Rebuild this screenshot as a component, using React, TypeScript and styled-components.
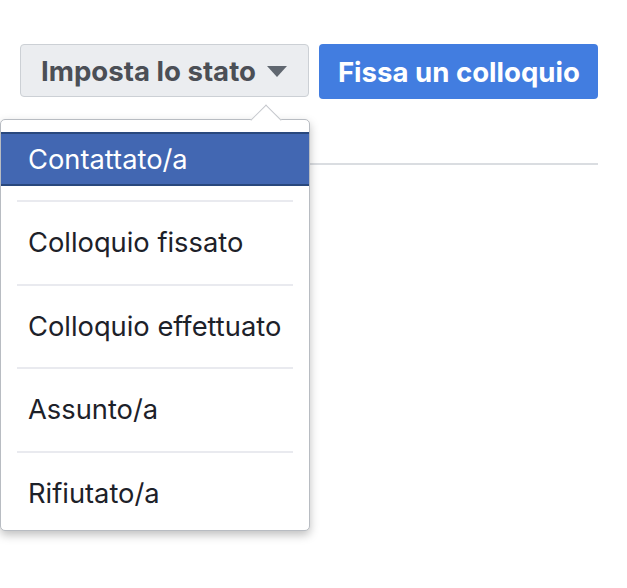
import React from "react";
import styled, { createGlobalStyle } from "styled-components";

const Global = createGlobalStyle`
  html, body { margin: 0; padding: 0; background: #ffffff; }
  body { font-family: Inter, "Helvetica Neue", Arial, sans-serif; -webkit-font-smoothing: antialiased; }
`;

const Page = styled.div`
  position: relative;
  width: 627px;
  height: 588px;
  padding: 44px 29px 0 20px;
  box-sizing: border-box;
`;

const Toolbar = styled.div`
  display: flex;
  align-items: flex-start;
  gap: 10px;
`;

const GrayButton = styled.button`
  flex-shrink: 0;
  white-space: nowrap;
  display: flex;
  align-items: center;
  gap: 11px;
  height: 53px;
  padding: 0 21px 0 20px;
  border: 1px solid #ccd0d5;
  border-radius: 4px;
  background: #ebedf0;
  color: #4b4f56;
  font-family: inherit;
  font-size: 27.6px;
  font-weight: 700;
  cursor: pointer;
`;

const Caret = styled.span`
  width: 0;
  height: 0;
  border-left: 10px solid transparent;
  border-right: 10px solid transparent;
  border-top: 11px solid #606770;
  margin-top: 2px;
`;

const BlueButton = styled.button`
  flex-shrink: 0;
  white-space: nowrap;
  height: 55px;
  padding: 0 18px 0 19px;
  border: none;
  border-radius: 4px;
  background: #427de0;
  color: #ffffff;
  font-family: inherit;
  font-size: 27.6px;
  font-weight: 700;
  cursor: pointer;
`;

const Divider = styled.div`
  margin-top: 64px;
  height: 2px;
  background: #dadde1;
`;

const Menu = styled.div`
  position: absolute;
  left: 0;
  top: 119px;
  width: 310px;
  box-sizing: border-box;
  padding: 12px 0 10px;
  background: #ffffff;
  border: 1px solid #b8bcc2;
  border-radius: 5px;
  box-shadow: 0 4px 10px rgba(0, 0, 0, 0.25);

  &::before {
    content: "";
    position: absolute;
    top: -11px;
    left: 254px;
    width: 21px;
    height: 21px;
    background: #ffffff;
    border-top: 1px solid #c4c7cc;
    border-left: 1px solid #c4c7cc;
    transform: rotate(45deg);
  }
`;

const Item = styled.div<{ $active?: boolean }>`
  position: relative;
  display: flex;
  align-items: center;
  box-sizing: border-box;
  height: 54px;
  padding: 0 27px;
  white-space: nowrap;
  font-size: 27.3px;
  font-weight: 400;
  color: ${(p) => (p.$active ? "#ffffff" : "#1d2129")};
  background: ${(p) => (p.$active ? "#4267b2" : "transparent")};
  border-top: 2px solid ${(p) => (p.$active ? "#29487d" : "transparent")};
  border-bottom: 2px solid ${(p) => (p.$active ? "#29487d" : "transparent")};
`;

const Separator = styled.div`
  height: 2px;
  margin: 14px 16px 13.5px;
  background: #e9eaef;
`;

const items = [
  "Contattato/a",
  "Colloquio fissato",
  "Colloquio effettuato",
  "Assunto/a",
  "Rifiutato/a",
];

export default function App() {
  return (
    <>
      <Global />
      <Page>
        <Toolbar>
          <GrayButton>
            Imposta lo stato
            <Caret />
          </GrayButton>
          <BlueButton>Fissa un colloquio</BlueButton>
        </Toolbar>
        <Divider />
        <Menu>
          {items.map((label, i) => (
            <React.Fragment key={label}>
              {i > 0 && <Separator />}
              <Item $active={i === 0}>{label}</Item>
            </React.Fragment>
          ))}
        </Menu>
      </Page>
    </>
  );
}
